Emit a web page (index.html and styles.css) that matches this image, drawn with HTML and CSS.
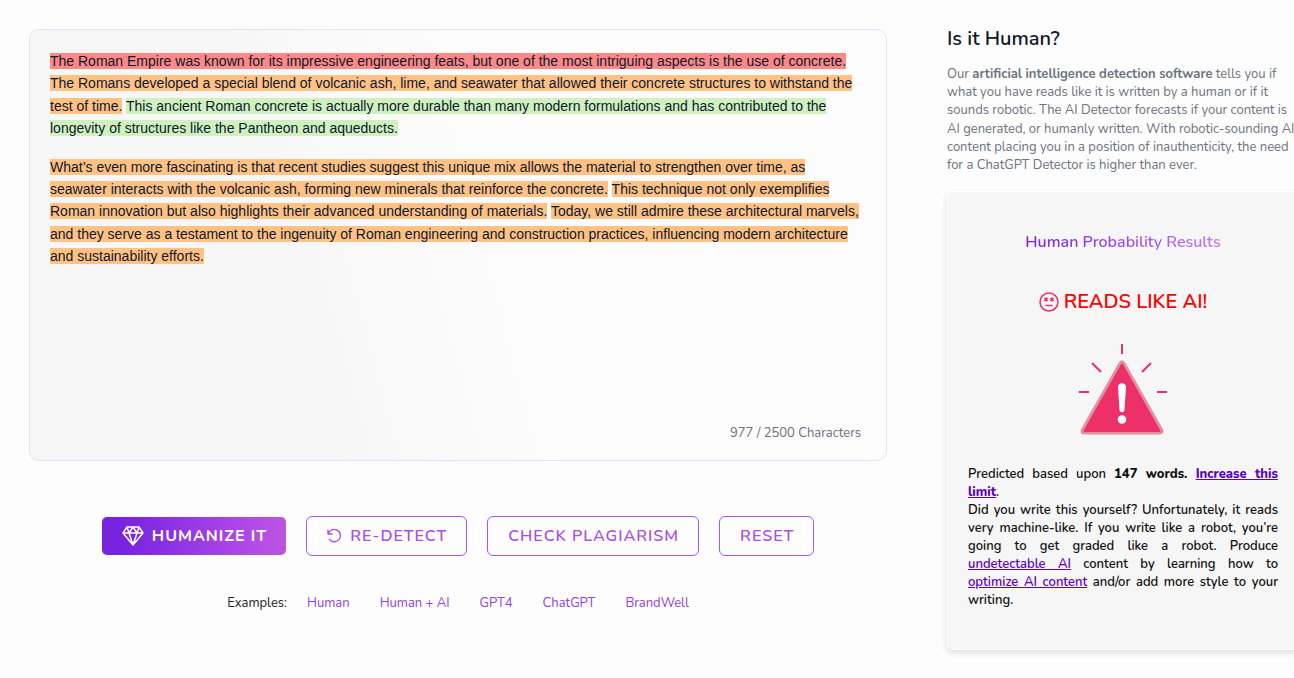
FILE: index.html
```html
<!DOCTYPE html>
<html lang="en">
<head>
    <meta charset="UTF-8">
    <meta name="viewport" content="width=device-width, initial-scale=1.0">
    <title>AI Detector</title>
    <link rel="stylesheet" href="styles.css">
</head>
<body>

    <div class="page">
        <main class="detector">
            <div class="editor">
                <div class="editor-text" contenteditable="true" role="textbox" aria-multiline="true" aria-label="Content to check" spellcheck="false">
                    <p><span class="hl red">The Roman Empire was known for its impressive engineering feats, but one of the most intriguing aspects is the use of concrete.</span> <span class="hl orange">The Romans developed a special blend of volcanic ash, lime, and seawater that allowed their concrete structures to withstand the test of time.</span> <span class="hl green">This ancient Roman concrete is actually more durable than many modern formulations and has contributed to the longevity of structures like the Pantheon and aqueducts.</span></p>
                    <p><span class="hl orange">What’s even more fascinating is that recent studies suggest this unique mix allows the material to strengthen over time, as seawater interacts with the volcanic ash, forming new minerals that reinforce the concrete.</span> <span class="hl orange">This technique not only exemplifies Roman innovation but also highlights their advanced understanding of materials.</span> <span class="hl orange">Today, we still admire these architectural marvels, and they serve as a testament to the ingenuity of Roman engineering and construction practices, influencing modern architecture and sustainability efforts.</span></p>
                </div>
                <div class="counter">977 / 2500 Characters</div>
            </div>

            <div class="buttons">
                <button type="button" class="btn btn-primary">
                    <svg width="22" height="20" viewBox="0 0 22 20" fill="none" stroke="currentColor" stroke-width="1.5" stroke-linejoin="round" aria-hidden="true">
                        <path d="M5 1h12l4 6-10 12L1 7zM1 7h20M5 1l2 6 4 12 4-12 2-6M7 7l4-6 4 6"/>
                    </svg>
                    HUMANIZE IT
                </button>
                <button type="button" class="btn">
                    <svg width="15" height="14" viewBox="0 0 15 14" fill="none" stroke="currentColor" stroke-width="1.3" stroke-linecap="round" stroke-linejoin="round" aria-hidden="true">
                        <path d="M1 1v4h4M1.300 4.700A6.200 6.200 0 1 1 2.200 10.200"/>
                    </svg>
                    RE-DETECT
                </button>
                <button type="button" class="btn">CHECK PLAGIARISM</button>
                <button type="button" class="btn">RESET</button>
            </div>

            <div class="examples">
                <span class="examples-label">Examples:</span>
                <a href="#human">Human</a>
                <a href="#human-ai">Human + AI</a>
                <a href="#gpt4">GPT4</a>
                <a href="#chatgpt">ChatGPT</a>
                <a href="#brandwell">BrandWell</a>
            </div>
        </main>

        <aside class="sidebar">
            <h2>Is it Human?</h2>
            <p class="intro">Our <strong>artificial intelligence detection software</strong> tells you if what you have reads like it is written by a human or if it sounds robotic. The AI Detector forecasts if your content is AI generated, or humanly written. With robotic-sounding AI content placing you in a position of inauthenticity, the need for a ChatGPT Detector is higher than ever.</p>

            <section class="results">
                <h3>Human Probability Results</h3>
                <div class="verdict">
                    <svg width="20" height="20" viewBox="0 0 20 20" fill="none" stroke="#ed3168" stroke-width="1.5" aria-hidden="true">
                        <circle cx="10" cy="10" r="9"/>
                        <path d="M5.500 6l3 3m0-3l-3 3M11.500 6l3 3m0-3l-3 3" stroke-width="1.800"/>
                        <path d="M6.500 13.500h7"/>
                    </svg>
                    READS LIKE AI!
                </div>
                <svg class="warning" width="88" height="92" viewBox="0 0 88 92" aria-hidden="true">
                    <path d="M43 1v10M13 20l9 9M72 20l-9 9M0 49h10M78 49h10" fill="none" stroke="#ed3168" stroke-width="2"/>
                    <path d="M43 21L81 88H5z" fill="#e3929f" stroke="#e3929f" stroke-width="7" stroke-linejoin="round"/>
                    <path d="M43 21.500L80.500 88h-75z" fill="#ed3168" stroke="#ed3168" stroke-width="2" stroke-linejoin="round"/>
                    <path d="M39 44c0-5 8-5 8 0l-1.500 23c-.3 3-4.700 3-5 0z" fill="#fff"/>
                    <circle cx="43" cy="76.500" r="4.300" fill="#fff"/>
                </svg>
                <div class="summary">
                    <p>Predicted based upon <strong>147 words. <a href="#pricing">Increase this limit</a></strong>.</p>
                    <p>Did you write this yourself? Unfortunately, it reads very machine-like. If you write like a robot, you’re going to get graded like a robot. Produce <a href="#undetectable">undetectable AI</a> content by learning how to <a href="#optimize">optimize AI content</a> and/or add more style to your writing.</p>
                </div>
            </section>
        </aside>
    </div>

</body>
</html>
```
FILE: styles.css
```css
* {
    box-sizing: border-box;
}

body {
    margin: 0;
    background-color: #fdfdfd;
    color: #0f172a;
    font-family: Nunito, "Open Sans", sans-serif;
    font-size: 13px;
    line-height: 18px;
    overflow-x: hidden;
}

h2, h3, p {
    margin: 0;
}

.page {
    display: grid;
    grid-template-columns: minmax(0, 1fr) 352px;
    gap: 60px;
    padding: 29px 0 27px 29px;
    margin-right: -5px; /* the results card runs off the right edge */
}

.editor {
    display: flex;
    flex-direction: column;
    min-height: 432px;
    padding: 20px 20px 18px;
    border: 1px solid #e9defc;
    border-radius: 10px;
    background: linear-gradient(75deg, #f7f7f7 32%, #fcfcfc 55%);
}

.editor-text {
    flex: 1;
    outline: none;
    font-family: Arial, "Liberation Sans", sans-serif;
    font-size: 14px;
    line-height: 1.6;
}

.editor-text p {
    margin-bottom: 16px;
}

.red {
    background-color: #ff8888;
}

.orange {
    background-color: #ffc284;
}

.green {
    background-color: #cff1c0;
}

.counter {
    padding-right: 5px;
    text-align: right;
    color: #6b7280;
}

.buttons {
    display: flex;
    justify-content: center;
    align-items: center;
    gap: 20px;
    margin-top: 55px;
}

.btn {
    display: flex;
    align-items: center;
    gap: 8px;
    height: 40px;
    padding: 0 19px 0 20px;
    border: 1px solid #a855f7;
    border-radius: 6px;
    background: transparent;
    color: #a94fe3;
    font-family: inherit;
    font-size: 16px;
    font-weight: 600;
    letter-spacing: 1px;
    white-space: nowrap;
    cursor: pointer;
}

.btn-primary {
    height: 38px;
    border: 0;
    border-radius: 5px;
    background: linear-gradient(90deg, #7622df 10%, #ad48e8 75%, #bd55e0);
    color: #fff;
    font-weight: 700;
}

.examples {
    display: flex;
    justify-content: center;
    gap: 30px;
    margin-top: 38px;
}

.examples-label {
    margin-right: -10px;
    color: #222;
}

.examples a {
    color: #9340e4;
    text-decoration: none;
}

.sidebar h2 {
    font-size: 20px;
    font-weight: 600;
    line-height: 20px;
}

.intro {
    margin-top: 16px;
    color: #6b7280;
    line-height: 1.4;
}

.intro strong {
    font-weight: 700;
}

.results {
    display: flex;
    flex-direction: column;
    align-items: center;
    margin-top: 17px;
    padding: 40px 20px;
    border: 1px solid #fff;
    border-radius: 6px;
    background-color: #f6f6f6;
    box-shadow: 0 3px 7px rgba(0, 0, 0, 0.12);
}

.results h3 {
    background: linear-gradient(90deg, #7622df, #c07af7);
    -webkit-background-clip: text;
    background-clip: text;
    color: transparent;
    font-size: 16px;
    font-weight: 600;
    line-height: 20px;
}

.verdict {
    display: flex;
    align-items: center;
    gap: 5px;
    margin-top: 38px;
    color: #f00;
    font-size: 20px;
    font-weight: 600;
    line-height: 24px;
}

.warning {
    margin-top: 29px;
}

.summary {
    width: 100%;
    margin-top: 30px;
    color: #111;
    font-weight: 600;
    text-align: justify;
}

.summary strong {
    font-weight: 800;
}

.summary a {
    color: #5b00c4;
}
```
